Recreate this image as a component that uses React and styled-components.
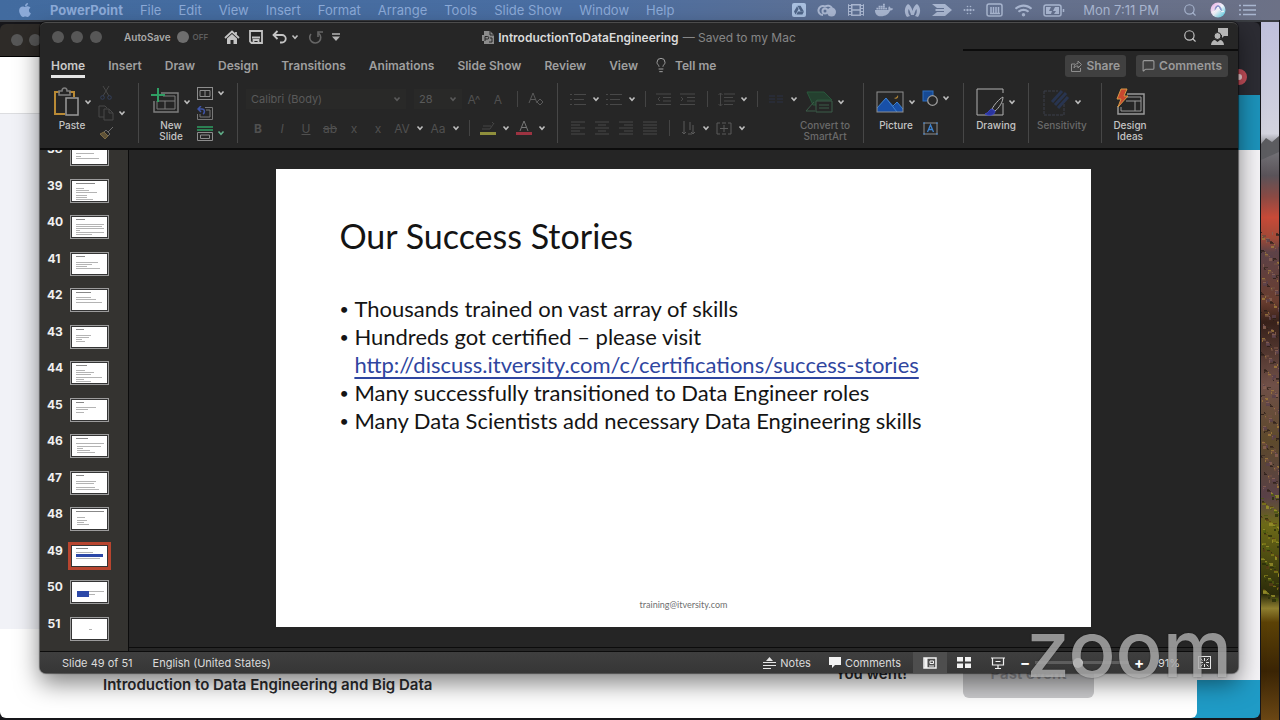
import styled, { createGlobalStyle, css } from "styled-components";
import { FaApple, FaDocker, FaFilm, FaGoogleDrive, FaWifi } from "react-icons/fa";
import { Lightbulb, MessageSquare, Search } from "lucide-react";

const GlobalStyle = createGlobalStyle`
  * {
    box-sizing: border-box;
  }

  body {
    margin: 0;
    background: #16161a;
    font-family: Inter, "Liberation Sans", sans-serif;
  }

  button, select, input {
    font: inherit;
    color: inherit;
    border: 0;
    margin: 0;
    padding: 0;
    background: none;
  }

  svg {
    display: block;
    flex: none;
  }
`;

const menus = ["File", "Edit", "View", "Insert", "Format", "Arrange", "Tools", "Slide Show", "Window", "Help"];

const tabs = ["Home", "Insert", "Draw", "Design", "Transitions", "Animations", "Slide Show", "Review", "View"];

// each line of a thumbnail is [x, y, width]
const slides = [
  { no: 38, lines: [[4, 5, 9], [4, 9, 18], [4, 12, 5], [4, 14, 23]] },
  { no: 39, title: 19, lines: [[4, 7, 8], [4, 9, 13], [4, 11, 21], [4, 14, 11], [4, 16, 11], [4, 18, 17]] },
  { no: 40, title: 9, lines: [[4, 7, 28], [4, 9, 26], [4, 11, 28], [4, 13, 4], [4, 15, 28], [4, 17, 16]] },
  { no: 41, title: 9, lines: [[4, 8, 22], [4, 10, 16], [4, 12, 11], [4, 14, 24]] },
  { no: 42, title: 15, lines: [[4, 7, 15], [4, 9, 20], [4, 12, 26]] },
  { no: 43, title: 8, lines: [[4, 8, 15], [4, 10, 13], [4, 12, 6], [4, 14, 9]] },
  { no: 44, title: 11, lines: [[4, 7, 9], [4, 9, 18], [4, 11, 15], [4, 14, 26], [4, 16, 8], [4, 18, 15]] },
  { no: 45, title: 8, lines: [[4, 7, 20], [4, 9, 12], [4, 12, 8]] },
  { no: 46, title: 12, lines: [[4, 7, 28], [5, 10, 24], [5, 12, 6], [5, 14, 13], [5, 16, 18]] },
  { no: 47, title: 8, lines: [[4, 8, 20], [4, 10, 18], [4, 14, 19], [4, 16, 23]] },
  { no: 48, title: 28, lines: [[5, 8, 8], [5, 11, 10], [5, 13, 7], [5, 15, 12]] },
  { no: 49, title: 12, lines: [[4, 6, 17], [4, 12, 24]], blue: [4, 8, 27, 3] },
  { no: 50, lines: [[17, 9, 15], [17, 12, 6]], blue: [5, 9, 12, 6] },
  { no: 51, lines: [[17, 10, 3]] },
];

const dim = "#5a5a5a";
const faint = "#484848";
const light = "#c4c4c4";

function Glyph({ w = 16, h = w, box, color = light, sw = 1, children }) {
  return (
    <svg
      width={w}
      height={h}
      viewBox={box || `0 0 ${w} ${h}`}
      fill="none"
      stroke={color}
      strokeWidth={sw}
      aria-hidden="true"
    >
      {children}
    </svg>
  );
}

const Chevron = ({ color = "#bdbdbd" }) => (
  <Glyph w={8} h={6} color={color} sw={1.6}>
    <path d="M1.5 1.5 4 4.2 6.5 1.5" />
  </Glyph>
);

/* ---------- menu bar icons ---------- */

const CloudIcon = () => (
  <Glyph w={20} h={16} color="currentColor" sw={2}>
    <path d="M6 13a4.500 4.500 0 1 1 2-8.500A5 5 0 0 1 15 6" />
    <circle cx="8" cy="9" r="2.500" />
    <circle cx="14.500" cy="10" r="4.500" fill="currentColor" stroke="none" />
  </Glyph>
);

const MalwareIcon = () => (
  <Glyph w={17} h={15} color="none">
    <path
      fill="currentColor"
      d="M3 14C0 10 0 4 4 1c2 1 4 4 4.500 7C9 5 11 2 13 1c4 3 4 9 1 13l-3-1c2-2 2-5 1.500-7-1 1-2 4-2.500 6H7C6.500 10 5.500 7 4.500 6 4 8 4 11 6 13z"
    />
  </Glyph>
);

const ArrowIcon = () => (
  <Glyph w={20} h={14} color="none">
    <path fill="currentColor" d="M0 1h13l7 6-7 6H0l5-4h7V8H4L3 7l1-1h8V5H5z" />
  </Glyph>
);

const DotsIcon = () => (
  <Glyph w={12} h={12} color="none">
    <g fill="currentColor">
      <circle cx="1.500" cy="6" r="1" />
      <circle cx="4.500" cy="6" r="1.200" />
      <circle cx="7.500" cy="6" r="1.200" />
      <circle cx="10.500" cy="6" r="1" />
      <circle cx="4.500" cy="2.500" r=".8" />
      <circle cx="7.500" cy="2.500" r=".8" />
      <circle cx="4.500" cy="9.500" r=".8" />
      <circle cx="7.500" cy="9.500" r=".8" />
    </g>
  </Glyph>
);

const MemoryIcon = () => (
  <Glyph w={18} h={14} color="currentColor" sw={1.5}>
    <rect x="1" y="1" width="15" height="12" rx="2" />
    <path d="M5 4v6M7.500 4v6M10 4v6M12.500 4v6" />
    <path d="M4 10.500h10" />
  </Glyph>
);

const BatteryIcon = () => (
  <Glyph w={22} h={13} color="currentColor" sw={1.5}>
    <rect x="1" y="1" width="17" height="11" rx="2" />
    <path d="M20.500 5v3" />
    <path fill="currentColor" stroke="none" d="M3 3h5L6 7h3l-1 3H3zM16 10h-5l2-3h-3l2-4h4z" />
  </Glyph>
);

const SiriIcon = () => (
  <Glyph w={16} color="none">
    <defs>
      <linearGradient id="siri" x1="0" y1="0" x2="1" y2="1">
        <stop offset="0" stopColor="#e9a5e2" />
        <stop offset=".5" stopColor="#f2f4fb" />
        <stop offset="1" stopColor="#3fc6e0" />
      </linearGradient>
    </defs>
    <circle cx="8" cy="8" r="7.500" fill="url(#siri)" />
    <path fill="#4a5fae" d="M8 3c-3 1-4 4-3 6l3-4 3 5c2-2 0-6-3-7z" opacity=".6" />
    <path stroke="#fff" d="M2 10c3 1 4-3 6-5 2 3 3 6 6 4" />
  </Glyph>
);

const ListIcon = () => (
  <Glyph w={17} h={12} color="currentColor" sw={1.500}>
    <path d="M4 1.500h13M4 6h13M4 10.500h13M0 1.500h2M0 6h2M0 10.500h2" />
  </Glyph>
);

/* ---------- title bar icons ---------- */

const HomeIcon = () => (
  <Glyph w={16} h={15} color="#c4c4c4" sw={1.800}>
    <path d="M1 8 8 1.500 15 8M12 2v3" />
    <path fill="#c4c4c4" stroke="none" d="M3 8.500 8 4l5 4.500V14H9.500v-4h-3v4H3z" />
  </Glyph>
);

const SaveIcon = () => (
  <Glyph w={14} color="#c4c4c4" sw={1.800}>
    <path d="M1 1h12v12H2.500L1 11.500z" />
    <path d="M3 7.500h8M4.500 13v-3h5v3" />
  </Glyph>
);

const UndoIcon = () => (
  <Glyph w={15} h={14} color="#c4c4c4" sw={1.800}>
    <path d="M5.500 1 1.500 5l4 4M1.500 5H10a3.500 3.500 0 0 1 0 7.500H8" />
  </Glyph>
);

const RedoIcon = () => (
  <Glyph w={15} h={14} color="#666" sw={1.600}>
    <path d="M3 4a5.500 5.500 0 1 0 8-.5M10 7V2h5" />
  </Glyph>
);

const CustomIcon = () => (
  <Glyph w={8} h={8} color="#b5b5b5" sw={1.500}>
    <path d="M0 1h8" />
    <path d="M0 3.500h8L4 8z" fill="#b5b5b5" stroke="none" />
  </Glyph>
);

const DocIcon = () => (
  <Glyph w={12} h={13} color="none">
    <path fill="#8b8b8b" d="M2 0h6l4 4v9H2v-3H0V4h2z" />
    <path stroke="#262626" d="M8 0v4h4M3 8V5.500h2.500a1 1 0 0 1 0 2.500H3v2M8 7h2v4H7" />
  </Glyph>
);

const PersonIcon = () => (
  <Glyph w={17} h={17} color="none">
    <path fill="#b5b5b5" d="M7 0h10v8h-4l-2 2V7L7 6z" />
    <circle cx="6.500" cy="8" r="3.500" fill="#b5b5b5" stroke="#262626" />
    <path fill="#b5b5b5" d="M0 17c0-3 2-5 4-5l2.500 2L9 12c2 0 4 2 4 5z" />
  </Glyph>
);

const ShareIcon = () => (
  <Glyph w={11} h={12} color="#8d8d8d">
    <path d="M4 4H.5v7.500h9V8M3 8c0-3 2-4.500 4-4.500V1l3.500 3.500L7 8V6C5 6 4 6.500 3 8z" />
  </Glyph>
);

/* ---------- ribbon icons ---------- */

const PasteIcon = () => (
  <Glyph w={28} h={30} color="none">
    <path stroke="#b98a35" strokeWidth="2" d="M8 5H3v22h10M17 5h5v5" />
    <path stroke="#7d7d7d" strokeWidth="1.500" d="M7 8V4h3c0-4 5-4 5 0h3v4z" />
    <rect x="14" y="11" width="12" height="17" stroke="#9a9a9a" strokeWidth="1.500" />
  </Glyph>
);

const CutIcon = () => (
  <Glyph w={12} h={14} color={faint}>
    <path d="M3 0l6 10M9 0 3 10" />
    <circle cx="2.500" cy="11.500" r="1.800" stroke="#34405c" />
    <circle cx="9.500" cy="11.500" r="1.800" stroke="#34405c" />
  </Glyph>
);

const CopyIcon = () => (
  <Glyph w={16} h={16} color={faint}>
    <path d="M6 12H1V1h6l2 2" />
    <path d="M6 4h5l4 4v7H6zM11 4v4h4" />
  </Glyph>
);

const BrushIcon = () => (
  <Glyph w={15} h={14} color="#6b6b6b">
    <path d="M14 1 9 6M7 4l4 4-2 2-4-4z" />
    <path fill="#5d5138" stroke="#7c6a42" d="M5 6 1 8l5 5 3-3z" />
  </Glyph>
);

const NewSlideIcon = () => (
  <Glyph w={28} h={27} color="#7d7d7d">
    <path strokeWidth="1.500" d="M10 5h17v19H3V13" />
    <path d="M6 13v8h18V8H12M6 13h18M14 13v8" />
    <path stroke="#2f9e63" strokeWidth="2" d="M7 0v14M0 7h14" />
  </Glyph>
);

const LayoutIcon = () => (
  <Glyph w={16} h={13} color="#8d8d8d">
    <rect x=".5" y=".5" width="15" height="12" />
    <path d="M3 3.500h10v6H3zM8 3.500v6" />
  </Glyph>
);

const ResetIcon = () => (
  <Glyph w={16} h={14} color="#777">
    <path d="M8 1.500h7.500v12H.5V8M3 8v3h10V4H9" />
    <path stroke="#3f55a8" strokeWidth="1.500" d="M4 0 1 3l3 3M1 3h4c3 0 3 4 1 5" />
  </Glyph>
);

const SectionIcon = () => (
  <Glyph w={16} h={15} color="#8d8d8d">
    <path stroke="#2f9e63" strokeWidth="1.500" d="M0 1h16M0 4h16" />
    <path d="M.5 6.500h15v8H.5zM3.500 9h9v3.500h-9z" />
  </Glyph>
);

const HighlightIcon = () => (
  <Glyph w={16} h={16} color="#454545">
    <path d="M2 9h8l4-6M3 6h8M12 2l2 2" />
    <path stroke="#8f8f3c" strokeWidth="3" d="M0 13.500h16" />
  </Glyph>
);

const FontColorIcon = () => (
  <Glyph w={16} h={16} color="#777">
    <path d="M4 11 8 1l4 10M5.500 7.500h5" />
    <path stroke="#9c3341" strokeWidth="3" d="M0 13.500h16" />
  </Glyph>
);

const ClearIcon = () => (
  <Glyph w={16} h={14} color={dim}>
    <path d="M1 11 5 1l4 10M2.500 7.500h5" />
    <path d="M9 10l3-3 3 3-3 3z" />
  </Glyph>
);

const BulletsIcon = () => (
  <Glyph w={16} h={13} color={faint}>
    <path d="M4 1.500h12M4 6.500h10M4 11.500h12M0 1.500h2M0 6.500h2M0 11.500h2" />
  </Glyph>
);

const IndentIcon = ({ flip }) => (
  <Glyph w={16} h={13} color={faint}>
    <path d="M0 1h15M7 4.500h8M7 8h8M0 11.500h15" />
    <path d={flip ? "M1 4l2 2-2 2" : "M4 4 2 6l2 2"} />
  </Glyph>
);

const SpacingIcon = () => (
  <Glyph w={17} h={15} color={faint}>
    <path d="M6 2h11M6 5.500h9M6 9h11M6 12.500h9M2.500 1v13M.5 3l2-2 2 2M.5 12l2 2 2-2" />
  </Glyph>
);

const ColumnsIcon = () => (
  <Glyph w={14} h={9} color="#2a3144">
    <path d="M0 1h6M0 4h6M0 7h6M8 1h6M8 4h6M8 7h6" />
  </Glyph>
);

const alignPaths = {
  left: "M0 1h14M0 4h9M0 7h14M0 10h9M0 13h14",
  center: "M0 1h14M3 4h8M0 7h14M3 10h8M0 13h14",
  right: "M0 1h14M5 4h9M0 7h14M5 10h9M0 13h14",
  justify: "M0 1h14M0 4h14M0 7h14M0 10h14M0 13h14",
};

const AlignIcon = ({ kind }) => (
  <Glyph w={14} h={14} color={faint}>
    <path d={alignPaths[kind]} />
  </Glyph>
);

const DirectionIcon = () => (
  <Glyph w={13} h={14} color={dim}>
    <path d="M2 0v13M0 11l2 2 2-2M8 1v8M6 13h4M11 4v9M9 11l2 2 2-2" />
  </Glyph>
);

const AlignTextIcon = () => (
  <Glyph w={16} h={13} color={dim}>
    <path d="M4 1H1v11h3M12 1h3v11h-3M6 1h4M6 12h4M4 6.500h8M8 3v7" />
  </Glyph>
);

const SmartArtIcon = () => (
  <Glyph w={28} h={22} color="#3b5c49">
    <path fill="#24402f" stroke="#28563b" d="M2 1h17l8 8H12v5l-4 0z" />
    <path d="M1 20 9 11M1 20h9" />
    <path fill="#262626" d="M11 10h16v11H11z" />
    <path d="M14 14h10M14 17h10" />
  </Glyph>
);

const PictureIcon = () => (
  <Glyph w={28} h={22} color="none">
    <path fill="#1850a8" d="M1 17 10 7l8 8 3-4 6 7v3H1z" />
    <path stroke="#3f83cf" d="M1 17 10 7l11 14M17 15l4-4 6 7" />
    <rect x="1" y="1" width="26" height="20" stroke="#8f8f8f" />
    <path fill="#b98a35" d="M22 4c-1 2-2 3-4 3 2 2 5 0 4-3z" />
  </Glyph>
);

const ShapesIcon = () => (
  <Glyph w={16} h={16} color="none">
    <rect x="1" y="1" width="10" height="10" fill="#174a94" stroke="#2f6fc0" />
    <circle cx="10.500" cy="10.500" r="4.800" fill="#262626" stroke="#9c9c9c" strokeWidth="1.300" />
  </Glyph>
);

const TextBoxIcon = () => (
  <Glyph w={15} h={13} color="#8d8d8d">
    <rect x="1" y="1" width="13" height="11" />
    <path stroke="#3f83cf" strokeWidth="1.300" d="M4.500 10 7.500 3l3 7M5.500 7.500h4" />
    <path stroke="#3f83cf" d="M0 1h2M13 1h2M0 12h2M13 12h2" />
  </Glyph>
);

const DrawingIcon = () => (
  <Glyph w={28} h={28} color="#b0b0b0">
    <path d="M27 15v12H1V1h26v4" />
    <path fill="#262626" d="M27 9c-4 2-9 8-11 12l3 2c4-3 8-9 8-14z" />
    <path fill="#2b35a0" stroke="#3d49c0" d="M16 21c-3 0-3 4-7 5 3 2 10 2 10-3z" />
  </Glyph>
);

const SensitivityIcon = () => (
  <Glyph w={28} h={28} color="#3a3f4a">
    <path d="M2 3h14M2 3v24h20V12" strokeDasharray="3 1" />
    <path stroke="#28344f" strokeWidth="3" d="M10 14 20 3M13 17 24 5M16 20 26 9" />
  </Glyph>
);

const IdeasIcon = () => (
  <Glyph w={30} h={28} color="#999">
    <path strokeWidth="1.500" d="M12 6h17v20H3v-8" />
    <path d="M6 19v4h20V9H12M11 13h15M20 13v10" />
    <path fill="#c9482f" stroke="#d69a45" d="M6 1h6L9 8h4L3 19l3-8H2z" />
  </Glyph>
);

/* ---------- status bar icons ---------- */

const NotesIcon = () => (
  <Glyph w={13} h={12} color="#e6e6e6" sw={1.200}>
    <path d="M0 5.500h13M0 8.500h13M0 11.500h8" />
    <path fill="#e6e6e6" stroke="none" d="M3 4 6.500 0 10 4z" />
  </Glyph>
);

const BubbleIcon = () => (
  <Glyph w={12} h={11} color="none">
    <path fill="#f2f2f2" d="M0 0h12v8H6l-3 3V8H0z" />
  </Glyph>
);

const NormalViewIcon = () => (
  <Glyph w={14} h={12} color="#f2f2f2" sw={1.500}>
    <rect x="1" y="1" width="12" height="10" />
    <path d="M3 1v10" strokeWidth="3" />
    <path d="M7 4h3.500v2.500H7zM6 9h5" strokeWidth="1" />
  </Glyph>
);

const SorterIcon = () => (
  <Glyph w={14} h={11} color="none">
    <path fill="#f2f2f2" d="M0 0h6v4.500H0zM8 0h6v4.500H8zM0 6.500h6V11H0zM8 6.500h6V11H8z" />
  </Glyph>
);

const ShowIcon = () => (
  <Glyph w={14} h={12} color="#f2f2f2" sw={1.200}>
    <path d="M0 1h14M1.500 1v7h11V1M7 8v3M4 11.500h6M4.500 4.500h5" />
  </Glyph>
);

const FitIcon = () => (
  <Glyph w={13} h={13} color="#e6e6e6">
    <rect x=".5" y=".5" width="12" height="12" />
    <path d="M6.500 2v3M6.500 8v3M2 6.500h3M8 6.500h3M2.500 2.500l2 2M10.500 2.500l-2 2M2.500 10.500l2-2M10.500 10.500l-2-2" />
  </Glyph>
);

/* ---------- pieces ---------- */

function Big({ icon, label, chevron = true, muted }) {
  return (
    <BigTool $muted={muted} $narrow={!chevron}>
      <BigIcon>
        {icon}
        {chevron && <Chevron />}
      </BigIcon>
      <span>{label}</span>
    </BigTool>
  );
}

function Drop({ children, label }) {
  return (
    <>
      <Cell aria-label={label}>{children}</Cell>
      <Arrow aria-label={`${label} options`}>
        <Chevron />
      </Arrow>
    </>
  );
}

function Thumb({ slide, selected }) {
  const { title, lines, blue } = slide;
  return (
    <ThumbFrame $selected={selected}>
      <svg width="100%" height="100%" viewBox="0 0 35 20" preserveAspectRatio="none">
        {title && <rect x="4" y="2" width={title} height="1" fill="#888" />}
        {lines.map(([x, y, w]) => (
          <rect key={`${x}-${y}`} x={x} y={y} width={w} height="1" fill="#b4b4b4" />
        ))}
        {blue && <rect x={blue[0]} y={blue[1]} width={blue[2]} height={blue[3]} fill="#2c48a8" />}
      </svg>
    </ThumbFrame>
  );
}

// rocky hillside: a base gradient with specks scattered on top
const speckColors = ["#2a1c18", "#6e4c40", "#8a6152", "#3b2a20", "#a07a3c", "#59404a"];
const leafColors = ["#4c5a10", "#7f7a18", "#2b2f0a", "#98902c", "#5a4018"];

const specks = Array.from({ length: 420 }, (_, i) => {
  const y = 210 + ((i * 97) % 368);
  const set = y > 470 ? leafColors : speckColors;
  return { x: (i * 7 + (i % 5) * 3) % 18, y, w: 1 + (i % 4), h: 1 + (i % 3), fill: set[(i * 13) % set.length] };
});

function Hillside() {
  return (
    <Wallpaper viewBox="0 0 18 698" preserveAspectRatio="none" aria-hidden="true">
      <defs>
        <linearGradient id="hill" x1="0" y1="0" x2="0" y2="1">
          <stop offset="0" stopColor="#bfc0dc" />
          <stop offset=".16" stopColor="#d3d3de" />
          <stop offset=".18" stopColor="#77777c" />
          <stop offset=".22" stopColor="#5a5359" />
          <stop offset=".25" stopColor="#8a4a44" />
          <stop offset=".28" stopColor="#c84a38" />
          <stop offset=".31" stopColor="#a04a38" />
          <stop offset=".33" stopColor="#5d4247" />
          <stop offset=".4" stopColor="#6a3e30" />
          <stop offset=".43" stopColor="#38211a" />
          <stop offset=".52" stopColor="#705048" />
          <stop offset=".6" stopColor="#5e4a2c" />
          <stop offset=".68" stopColor="#5a4148" />
          <stop offset=".72" stopColor="#6d6a18" />
          <stop offset=".82" stopColor="#2c2c0a" />
          <stop offset=".84" stopColor="#8f7f30" />
          <stop offset=".86" stopColor="#5c4206" />
          <stop offset=".93" stopColor="#3a2404" />
          <stop offset="1" stopColor="#6b4714" />
        </linearGradient>
      </defs>
      <rect width="18" height="698" fill="url(#hill)" />
      <path d="M0 122 5 116l6 4 7-6v16L0 138z" fill="#5c5c60" />
      {specks.map((s, i) => (
        <rect key={i} x={s.x} y={s.y} width={s.w} height={s.h} fill={s.fill} opacity=".8" />
      ))}
    </Wallpaper>
  );
}

function MenuBar() {
  return (
    <MenuBarContainer>
      <AppMenus>
        <MenuItem aria-label="Apple">
          <FaApple size={16} />
        </MenuItem>
        <MenuItem $bold>PowerPoint</MenuItem>
        {menus.map((name) => (
          <MenuItem key={name}>{name}</MenuItem>
        ))}
      </AppMenus>
      <StatusItems>
        <Tray>
          <DriveBadge>
            <FaGoogleDrive size={10} />
          </DriveBadge>
          <CloudIcon />
          <FaFilm size={16} />
          <FaDocker size={18} />
          <MalwareIcon />
          <ArrowIcon />
          <DotsIcon />
          <MemoryIcon />
          <FaWifi size={17} />
          <BatteryIcon />
        </Tray>
        <Clock>Mon 7:11 PM</Clock>
        <Tray $end>
          <Search size={14} />
          <SiriIcon />
          <ListIcon />
        </Tray>
      </StatusItems>
    </MenuBarContainer>
  );
}

function TitleBar() {
  return (
    <TitleBarContainer>
      <TitleLeft>
        <Lights>
          <Light />
          <Light />
          <Light />
        </Lights>
        <AutoSave>
          AutoSave
          <Light />
          <small>OFF</small>
        </AutoSave>
        <QuickTools>
          <button aria-label="Home"><HomeIcon /></button>
          <button aria-label="Save"><SaveIcon /></button>
          <UndoGroup aria-label="Undo">
            <UndoIcon />
            <Chevron />
          </UndoGroup>
          <button aria-label="Redo"><RedoIcon /></button>
          <button aria-label="Customize toolbar"><CustomIcon /></button>
        </QuickTools>
      </TitleLeft>
      <DocTitle>
        <DocIcon />
        <strong>IntroductionToDataEngineering</strong>
        <span>— Saved to my Mac</span>
      </DocTitle>
      <TitleRight>
        <Search size={14} />
        <PersonIcon />
      </TitleRight>
    </TitleBarContainer>
  );
}

function Ribbon() {
  return (
    <RibbonContainer>
      <Group>
        <Big icon={<PasteIcon />} label="Paste" />
        <SmallColumn>
          <SmallRow><SmallCell aria-label="Cut"><CutIcon /></SmallCell></SmallRow>
          <SmallRow>
            <SmallCell aria-label="Copy"><CopyIcon /></SmallCell>
            <Arrow aria-label="Copy options"><Chevron /></Arrow>
          </SmallRow>
          <SmallRow><SmallCell aria-label="Format painter"><BrushIcon /></SmallCell></SmallRow>
        </SmallColumn>
      </Group>

      <Group>
        <Big icon={<NewSlideIcon />} label={<>New<br />Slide</>} />
        <SmallColumn>
          <SmallRow>
            <SmallCell aria-label="Layout"><LayoutIcon /></SmallCell>
            <Arrow aria-label="Layout options"><Chevron /></Arrow>
          </SmallRow>
          <SmallRow><SmallCell aria-label="Reset"><ResetIcon /></SmallCell></SmallRow>
          <SmallRow>
            <SmallCell aria-label="Section"><SectionIcon /></SmallCell>
            <Arrow aria-label="Section options"><Chevron color="#5fae88" /></Arrow>
          </SmallRow>
        </SmallColumn>
      </Group>

      <Group>
        <ToolRows>
          <ToolRow>
            <Picker $wide>
              <select aria-label="Font"><option>Calibri (Body)</option></select>
              <Chevron color={dim} />
            </Picker>
            <Picker>
              <select aria-label="Font size"><option>28</option></select>
              <Chevron color={dim} />
            </Picker>
            <Cell aria-label="Grow font">A^</Cell>
            <Cell aria-label="Shrink font">A</Cell>
            <Bar />
            <Cell aria-label="Clear formatting"><ClearIcon /></Cell>
          </ToolRow>
          <ToolRow>
            <Cell aria-label="Bold"><b>B</b></Cell>
            <Cell aria-label="Italic"><i>I</i></Cell>
            <Cell aria-label="Underline"><u>U</u></Cell>
            <Cell aria-label="Strikethrough"><s>ab</s></Cell>
            <Cell aria-label="Superscript">x</Cell>
            <Cell aria-label="Subscript">x</Cell>
            <Drop label="Character spacing">AV</Drop>
            <Drop label="Change case">Aa</Drop>
            <Bar />
            <Drop label="Highlight"><HighlightIcon /></Drop>
            <Drop label="Font color"><FontColorIcon /></Drop>
          </ToolRow>
        </ToolRows>
      </Group>

      <Group>
        <ToolRows>
          <ToolRow>
            <Drop label="Bullets"><BulletsIcon /></Drop>
            <Drop label="Numbering"><BulletsIcon /></Drop>
            <Bar />
            <Cell aria-label="Decrease indent"><IndentIcon /></Cell>
            <Cell aria-label="Increase indent"><IndentIcon flip /></Cell>
            <Bar />
            <Drop label="Line spacing"><SpacingIcon /></Drop>
            <Bar />
            <Drop label="Columns"><ColumnsIcon /></Drop>
          </ToolRow>
          <ToolRow>
            <Cell aria-label="Align left"><AlignIcon kind="left" /></Cell>
            <Cell aria-label="Center"><AlignIcon kind="center" /></Cell>
            <Cell aria-label="Align right"><AlignIcon kind="right" /></Cell>
            <Cell aria-label="Justify"><AlignIcon kind="justify" /></Cell>
            <Bar />
            <Drop label="Text direction"><DirectionIcon /></Drop>
            <Drop label="Align text"><AlignTextIcon /></Drop>
          </ToolRow>
        </ToolRows>
        <Big muted icon={<SmartArtIcon />} label={<>Convert to<br />SmartArt</>} />
      </Group>

      <Group>
        <Big icon={<PictureIcon />} label="Picture" />
        <SmallColumn>
          <SmallRow>
            <SmallCell aria-label="Shapes"><ShapesIcon /></SmallCell>
            <Arrow aria-label="Shapes options"><Chevron /></Arrow>
          </SmallRow>
          <SmallRow><SmallCell aria-label="Text box"><TextBoxIcon /></SmallCell></SmallRow>
        </SmallColumn>
      </Group>

      <Group><Big icon={<DrawingIcon />} label="Drawing" /></Group>
      <Group><Big muted icon={<SensitivityIcon />} label="Sensitivity" /></Group>
      <Group><Big icon={<IdeasIcon />} label={<>Design<br />Ideas</>} chevron={false} /></Group>
    </RibbonContainer>
  );
}

function StatusBar() {
  return (
    <StatusBarContainer>
      <StatusText>
        <span>Slide 49 of 51</span>
        <span>English (United States)</span>
      </StatusText>
      <StatusTools>
        <StatusButton $labelled><NotesIcon />Notes</StatusButton>
        <StatusButton $labelled><BubbleIcon />Comments</StatusButton>
        <Views>
          <StatusButton $active aria-label="Normal view"><NormalViewIcon /></StatusButton>
          <StatusButton aria-label="Slide sorter"><SorterIcon /></StatusButton>
          <StatusButton aria-label="Slide show"><ShowIcon /></StatusButton>
        </Views>
        <Zoomer>
          <button aria-label="Zoom out">−</button>
          <input type="range" aria-label="Zoom" min="10" max="190" defaultValue="91" />
          <button aria-label="Zoom in">+</button>
        </Zoomer>
        <ZoomValue>91%</ZoomValue>
        <StatusButton aria-label="Fit to window"><FitIcon /></StatusButton>
      </StatusTools>
    </StatusBarContainer>
  );
}

function App() {
  return (
    <Screen>
      <GlobalStyle />
      <MenuBar />
      <Desktop>
        <Hillside />

        <BackWindow>
          <BackHeader />
          <BackBanner />
          <BackPage />
          <BackFooter />
          <AlertDot />
        </BackWindow>

        <BrowserWindow>
          <BrowserHeader>
            <Light />
            <Light />
          </BrowserHeader>
          <BrowserTop />
          <BrowserPage />
          <EventRow>
            <EventName>Introduction to Data Engineering and Big Data</EventName>
            <Went>You went!</Went>
            <PastEvent disabled>Past event</PastEvent>
          </EventRow>
        </BrowserWindow>

        <OfficeWindow>
          <TitleBar />
          <TabBar>
            <Tabs>
              {tabs.map((name) => (
                <Tab key={name} $active={name === "Home"}>{name}</Tab>
              ))}
              <TellMe>
                <Lightbulb size={16} strokeWidth={1.5} />
                Tell me
              </TellMe>
            </Tabs>
            <TabActions>
              <ActionButton><ShareIcon />Share</ActionButton>
              <ActionButton><MessageSquare size={13} />Comments</ActionButton>
            </TabActions>
          </TabBar>
          <Ribbon />
          <Workspace>
            <ThumbPane>
              {slides.map((slide) => (
                <ThumbRow key={slide.no}>
                  <span>{slide.no}</span>
                  <Thumb slide={slide} selected={slide.no === 49} />
                </ThumbRow>
              ))}
            </ThumbPane>
            <Canvas>
              <Slide>
                <h1>Our Success Stories</h1>
                <ul>
                  <li>Thousands trained on vast array of skills</li>
                  <li>
                    Hundreds got certified – please visit{" "}
                    <a href="http://discuss.itversity.com/c/certifications/success-stories">
                      http://discuss.itversity.com/c/certifications/success-stories
                    </a>
                  </li>
                  <li>Many successfully transitioned to Data Engineer roles</li>
                  <li>Many Data Scientists add necessary Data Engineering skills</li>
                </ul>
                <footer>training@itversity.com</footer>
              </Slide>
            </Canvas>
          </Workspace>
          <StatusBar />
        </OfficeWindow>

        <Watermark>zoom</Watermark>
      </Desktop>
    </Screen>
  );
}

export default App;

const Screen = styled.div`
  display: flex;
  flex-direction: column;
  height: 100vh;
  min-height: 600px;
  overflow: hidden;
`;

const MenuBarContainer = styled.nav`
  display: flex;
  justify-content: space-between;
  height: 20px;
  padding: 0 24px 0 17px;
  font-size: 13px;
  line-height: 20px;
  color: #a9b6d0;
  background: linear-gradient(90deg, #426b9f, #4a6ea2 45%, #5d7094 65%, #6c7186);
`;

const AppMenus = styled.div`
  display: flex;
  gap: 17px;
  color: #8caad8;
`;

const MenuItem = styled.button`
  display: flex;
  align-items: center;
  white-space: nowrap;
  font-weight: ${({ $bold }) => ($bold ? 700 : 400)};
`;

const StatusItems = styled.div`
  display: flex;
  gap: 18px;
  white-space: nowrap;
`;

const Clock = styled.time`
  margin-right: 6px;
`;

const Tray = styled.div`
  display: flex;
  align-items: center;
  gap: ${({ $end }) => ($end ? 13 : 11)}px;
`;

const DriveBadge = styled.span`
  display: flex;
  align-items: center;
  justify-content: center;
  width: 14px;
  height: 14px;
  border-radius: 2px;
  color: #4f6588;
  background: #a9c0e0;
`;

const Desktop = styled.main`
  position: relative;
  flex: 1;
  margin-right: 1px;
  border-top: 2px solid #3a3d42;
`;

const Wallpaper = styled.svg`
  position: absolute;
  top: 0;
  right: 0;
  width: 18px;
  height: 100%;
`;

const DesktopWindow = styled.section`
  position: absolute;
  display: flex;
  flex-direction: column;
  overflow: hidden;
  border-radius: 6px;
`;

const BackWindow = styled(DesktopWindow)`
  inset: 0 19px 2px 600px;
`;

const BackHeader = styled.div`
  height: 73px;
  background: #2c2c33;
`;

const BackBanner = styled.div`
  height: 55px;
  background: #1c93bb;
`;

const BackPage = styled.div`
  flex: 1;
  background: #f5f4f7;
`;

const BackFooter = styled.div`
  height: 38px;
  background: #1f9bc6;
`;

const AlertDot = styled.span`
  position: absolute;
  top: 47px;
  right: 13px;
  width: 16px;
  height: 16px;
  border: 5px solid #c9505c;
  border-radius: 50%;
  background: #f2d5d8;
`;

const BrowserWindow = styled(DesktopWindow)`
  inset: 2px 82px 2px 0;
`;

const BrowserHeader = styled.div`
  display: flex;
  align-items: center;
  gap: 6px;
  height: 33px;
  padding: 0 11px;
  border-bottom: 1px solid #000;
  background: #2e2b28;
`;

const BrowserTop = styled.div`
  height: 57px;
  border-bottom: 1px solid #dcdde0;
  background: #fff;
`;

const BrowserPage = styled.div`
  flex: 1;
  background: #f1f2f7;
`;

const EventRow = styled.div`
  display: flex;
  align-items: flex-end;
  height: 89px;
  padding: 0 103px 20px;
  color: #2b2b2e;
  font-size: 15px;
  font-weight: 600;
  background: #fff;
`;

const EventName = styled.span`
  flex: 1;
  line-height: 26px;
`;

const Went = styled.span`
  margin-right: 56px;
  line-height: 48px;
`;

const PastEvent = styled.button`
  width: 131px;
  height: 46px;
  padding-bottom: 4px;
  border-radius: 6px;
  color: #96969a;
  background: #cbcbcd;
`;

const OfficeWindow = styled(DesktopWindow)`
  inset: 0 41px 47px 40px;
  border-top: 1px solid #4c4c4c;
  color: #c4c4c4;
  background: #262626;
  box-shadow: 0 10px 24px rgba(0, 0, 0, 0.5), 0 0 1px 1px rgba(0, 0, 0, 0.5);
`;

const TitleBarContainer = styled.header`
  display: grid;
  grid-template-columns: 1fr auto 1fr;
  height: 28px;
  font-size: 12px;
`;

const TitleLeft = styled.div`
  display: flex;
  align-items: center;
  padding-left: 12px;
`;

const Lights = styled.div`
  display: flex;
  gap: 7px;
  margin-right: 22px;
`;

const Light = styled.span`
  width: 12px;
  height: 12px;
  border-radius: 50%;
  background: #575757;
`;

const AutoSave = styled.label`
  display: flex;
  align-items: center;
  gap: 4px;
  font-size: 10px;
  font-weight: 600;
  color: #a9a9a9;

  > small {
    font-size: 8px;
    color: #5e5e5e;
  }

  > span {
    margin-left: 2px;
    background: #6e6e6e;
  }
`;

const QuickTools = styled.div`
  display: flex;
  align-items: center;
  gap: 9px;
  margin-left: 16px;
`;

const UndoGroup = styled.button`
  display: flex;
  align-items: center;
  gap: 4px;
`;

const DocTitle = styled.div`
  display: flex;
  align-items: center;
  gap: 4px;
  color: #868686;

  > strong {
    font-weight: 600;
    color: #dadada;
  }
`;

const TitleRight = styled.div`
  display: flex;
  align-items: center;
  justify-content: flex-end;
  gap: 14px;
  justify-self: end;
  width: 275px;
  padding-right: 10px;
  border-bottom: 2px solid #0c0c0c;
`;

const TabBar = styled.div`
  display: flex;
  justify-content: space-between;
  align-items: center;
  height: 29px;
  padding: 0 10px 0 11px;
`;

const Tabs = styled.div`
  display: flex;
  gap: 23px;
`;

const Tab = styled.button`
  height: 24px;
  padding-top: 3px;
  border-bottom: 3px solid transparent;
  font-size: 12px;
  font-weight: 600;
  line-height: 18px;
  white-space: nowrap;
  color: #9f9f9f;

  ${({ $active }) =>
    $active &&
    css`
      color: #c9c9c9;
      border-bottom-color: #e4e4e4;
    `}
`;

const TellMe = styled(Tab)`
  display: flex;
  gap: 6px;
  margin-left: -8px;
`;

const TabActions = styled.div`
  display: flex;
  gap: 10px;
`;

const ActionButton = styled.button`
  display: flex;
  align-items: center;
  gap: 4px;
  height: 22px;
  padding: 0 6px;
  border-radius: 3px;
  font-size: 12px;
  font-weight: 600;
  color: #9a9a9a;
  background: #404040;
`;

const RibbonContainer = styled.div`
  display: grid;
  grid-template-columns: 99px 99px 320px 306px 100px 65px 73px 1fr;
  height: 70px;
  border-bottom: 2px solid #0c0c0c;
`;

const Group = styled.div`
  display: flex;
  align-self: start;
  height: 60px;
  margin-top: 3px;
  padding-left: 8px;
  border-right: 1px solid #474747;

  &:last-child {
    border-right: 0;
  }
`;

const BigTool = styled.button`
  display: flex;
  flex-direction: column;
  align-items: center;
  min-width: ${({ $narrow }) => ($narrow ? 40 : 48)}px;
  font-size: 10px;
  font-weight: 500;
  line-height: 11px;
  white-space: nowrap;
  color: ${({ $muted }) => ($muted ? "#6a6a6a" : "#c4c4c4")};
`;

const BigIcon = styled.span`
  display: flex;
  align-items: center;
  gap: 4px;
  height: 37px;
`;

const SmallColumn = styled.div`
  display: flex;
  flex-direction: column;
  justify-content: space-around;
`;

const SmallRow = styled.div`
  display: flex;
  align-items: center;
`;

const Cell = styled.button`
  display: flex;
  align-items: center;
  justify-content: center;
  width: 24px;
  height: 20px;
  font-size: 12px;
  color: #505050;
`;

const SmallCell = styled(Cell)`
  width: 20px;
`;

const Arrow = styled(Cell)`
  width: 12px;
`;

const Bar = styled.span`
  width: 14px;
  height: 16px;
  background: linear-gradient(#444, #444) center / 1px 100% no-repeat;
`;

const ToolRows = styled.div`
  display: flex;
  flex-direction: column;
  gap: 9px;
  padding-top: 6px;
`;

const ToolRow = styled.div`
  display: flex;
  align-items: center;
  height: 20px;
`;

const Picker = styled.span`
  display: flex;
  align-items: center;
  width: ${({ $wide }) => ($wide ? 160 : 48)}px;
  height: 20px;
  margin-right: ${({ $wide }) => ($wide ? 8 : 0)}px;
  padding: 0 5px;
  font-size: 11px;
  color: #5a5a5a;
  background: #292928;

  > select {
    flex: 1;
    min-width: 0;
    appearance: none;
  }
`;

const Workspace = styled.div`
  display: flex;
  flex: 1;
  min-height: 0;
`;

const ThumbPane = styled.aside`
  display: flex;
  flex-direction: column;
  justify-content: space-between;
  width: 89px;
  padding-bottom: 10px;
  border-right: 1px solid #0c0c0c;
  overflow: hidden;
  background: #343330;

  > :first-child {
    margin-top: -8px;
  }
`;

const ThumbRow = styled.div`
  display: flex;
  gap: 9px;
  padding-left: 7px;
  font-size: 12px;
  font-weight: 700;
  line-height: 13px;
  color: #f0f0f0;

  > span {
    width: 14px;
    white-space: nowrap;
    text-align: center;
  }
`;

const ThumbFrame = styled.div`
  width: 39px;
  height: 24px;
  padding: 1px;
  border: 1px solid #9c9c9c;
  background: #343434;

  > svg {
    background: #fff;
  }

  ${({ $selected }) =>
    $selected &&
    css`
      border-color: #b8452f;
      box-shadow: 0 0 0 2px #b8452f;
    `}
`;

const Canvas = styled.div`
  display: flex;
  justify-content: center;
  flex: 1;
  margin-bottom: 3px;
  padding: 19px 0 20px;
  border-bottom: 1px solid #0c0c0c;
  background: #252525;
`;

const Slide = styled.article`
  display: flex;
  flex-direction: column;
  height: 100%;
  aspect-ratio: 16 / 9;
  padding: 45px 63px 14px;
  font-family: Lato, "Liberation Sans", sans-serif;
  color: #141414;
  background: #fff;

  > h1 {
    margin: 0;
    font-size: 34px;
    font-weight: 400;
    line-height: 44px;
  }

  > ul {
    flex: 1;
    margin: 37px 0 0;
    padding-left: 15px;
    font-size: 22px;
    line-height: 28px;
    list-style: none;
  }

  li::before {
    content: "•";
    float: left;
    margin-left: -15px;
    font-size: 16px;
  }

  a {
    display: block;
    width: max-content;
    color: #2f46a0;
    text-decoration-thickness: 2px;
    text-underline-offset: 4px;
    text-decoration-skip-ink: none;
  }

  > footer {
    font-size: 9px;
    line-height: 16px;
    text-align: center;
    color: #6f6f6f;
  }
`;

const StatusBarContainer = styled.footer`
  display: flex;
  justify-content: space-between;
  height: 22px;
  padding: 0 22px;
  border-top: 1px solid #0c0c0c;
  font-size: 11px;
  color: #dcdcdc;
  background: linear-gradient(#3f3f3f, #363636);
`;

const StatusText = styled.div`
  display: flex;
  align-items: center;
  gap: 20px;
`;

const StatusTools = styled.div`
  display: flex;
  align-items: center;
`;

const StatusButton = styled.button`
  display: flex;
  align-items: center;
  justify-content: center;
  gap: 4px;
  min-width: ${({ $labelled }) => ($labelled ? 0 : 24)}px;
  height: 21px;
  margin-right: ${({ $labelled }) => ($labelled ? 18 : 0)}px;
  background: ${({ $active }) => ($active ? "#4e4e4e" : "none")};
`;

const Views = styled.div`
  display: flex;
  margin-left: -6px;

  > button {
    width: 34px;
  }
`;

const Zoomer = styled.div`
  display: flex;
  align-items: center;
  gap: 5px;
  margin: 0 14px 0 5px;
  color: #fff;

  > button {
    width: 10px;
    font-size: 15px;
    font-weight: 700;
    line-height: 20px;
  }

  > input {
    width: 94px;
    height: 12px;
    appearance: none;
    background: linear-gradient(#5e5e5e, #5e5e5e) center / 100% 3px no-repeat;
  }

  > input::-webkit-slider-thumb {
    appearance: none;
    width: 10px;
    height: 10px;
    border-radius: 50%;
    background: #dedede;
  }
`;

const ZoomValue = styled.span`
  width: 34px;
`;

// semi transparent mark laid over everything on the desktop
const Watermark = styled.div`
  position: absolute;
  right: 47px;
  bottom: 26px;
  font-size: 78px;
  font-weight: 500;
  line-height: 90px;
  color: rgba(196, 196, 196, 0.72);
  text-shadow: 0 0 2px rgba(0, 0, 0, 0.4);
  pointer-events: none;
`;
